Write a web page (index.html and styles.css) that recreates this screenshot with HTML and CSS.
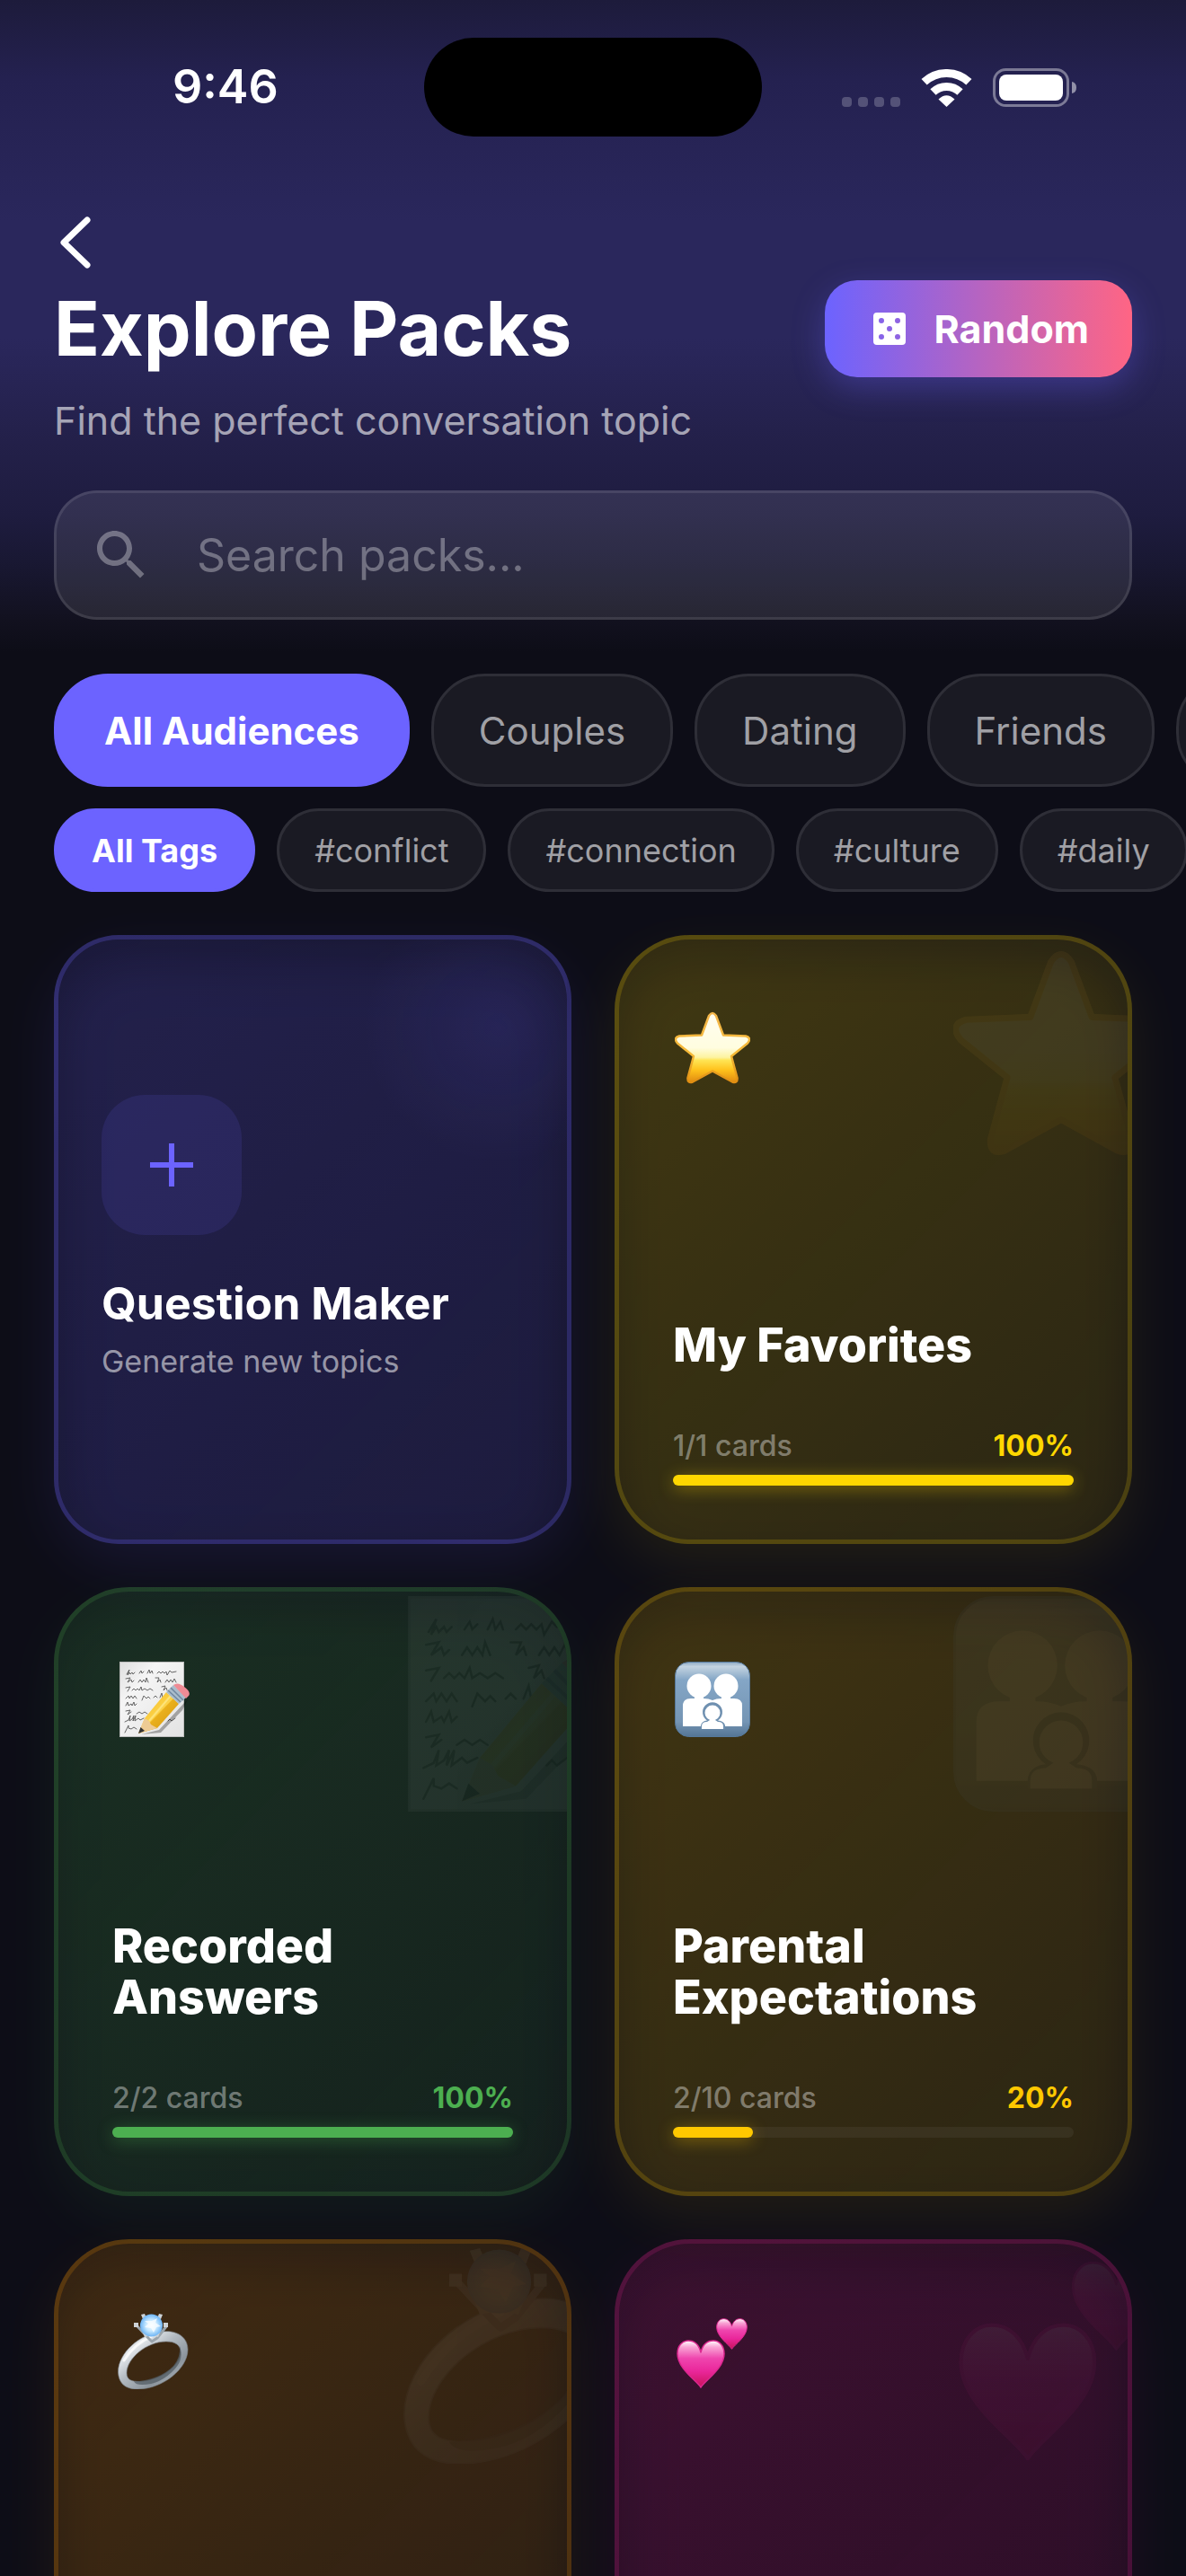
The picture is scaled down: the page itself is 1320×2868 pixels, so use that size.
FILE: index.html
```html
<!DOCTYPE html>
<html lang="en">
<head>
<meta charset="utf-8">
<meta name="viewport" content="width=device-width, initial-scale=1">
<title>Explore Packs</title>
<link rel="stylesheet" href="styles.css">
</head>
<body>
<svg class="sprite" aria-hidden="true">
  <defs>
    <linearGradient id="starFill" x1="0" y1="0" x2="0" y2="1">
      <stop offset="0" stop-color="#fffdf0"/><stop offset=".5" stop-color="#fffde0"/><stop offset=".64" stop-color="#fdf3a0"/><stop offset=".68" stop-color="#ffe555"/><stop offset=".82" stop-color="#ffc21c"/><stop offset="1" stop-color="#e08a10"/>
    </linearGradient>
    <linearGradient id="starRim" x1="0" y1="0" x2="0" y2="1">
      <stop offset="0" stop-color="#f3b64a"/><stop offset=".6" stop-color="#f5b936"/><stop offset="1" stop-color="#e08e12"/>
    </linearGradient>
    <linearGradient id="paperFill" x1="0" y1="0" x2="1" y2="1">
      <stop offset="0" stop-color="#dedede"/><stop offset=".3" stop-color="#f5f5f5"/><stop offset="1" stop-color="#e2e2e2"/>
    </linearGradient>
    <linearGradient id="pencilFill" x1="0" y1="0" x2="1" y2="1">
      <stop offset=".25" stop-color="#f7c22e"/><stop offset=".5" stop-color="#fcd34a"/><stop offset=".52" stop-color="#eab01c"/><stop offset="1" stop-color="#cf9310"/>
    </linearGradient>
    <linearGradient id="tileFill" x1="0" y1="0" x2="0" y2="1">
      <stop offset="0" stop-color="#8fabc4"/><stop offset=".06" stop-color="#c3d3e0"/><stop offset=".24" stop-color="#84a6c6"/><stop offset=".8" stop-color="#7595b4"/><stop offset="1" stop-color="#547595"/>
    </linearGradient>
    <linearGradient id="ringFill" x1="0" y1="0" x2="1" y2="1">
      <stop offset="0" stop-color="#b4bac0"/><stop offset=".25" stop-color="#e6eaee"/><stop offset=".45" stop-color="#b3bac1"/><stop offset=".7" stop-color="#8b949c"/><stop offset="1" stop-color="#c6ccd2"/>
    </linearGradient>
    <radialGradient id="gemFill">
      <stop offset="0" stop-color="#f2fbff"/><stop offset=".5" stop-color="#c6e8ff"/><stop offset="1" stop-color="#6db4f5"/>
    </radialGradient>
    <linearGradient id="heartFill" x1="0" y1="0" x2="0" y2="1">
      <stop offset="0" stop-color="#fff"/><stop offset=".14" stop-color="#f9a3d4"/><stop offset=".38" stop-color="#ef45ae"/><stop offset=".65" stop-color="#ea279b"/><stop offset="1" stop-color="#c9125a"/>
    </linearGradient>
    <symbol id="star" viewBox="0 0 84 84">
      <path d="M38 7Q42 1 46 7L54 28.500L79 29.500Q86 31.500 81 37.500L63 52L69.500 76Q70 82.500 64 80.500L42 68.500L20 80.500Q14 82.500 14.500 76L21 52L3 37.500Q-2 31.500 5 29.500L30 28.500Z" fill="url(#starFill)" stroke="url(#starRim)" stroke-width="2.500" stroke-linejoin="round"/>
    </symbol>
    <symbol id="memo" viewBox="0 0 84 84">
      <rect x="6.500" y=".5" width="71" height="83" fill="url(#paperFill)" stroke="#bdbdbd"/>
      <g fill="none" stroke="#555" stroke-width=".9" stroke-linecap="round">
        <path d="M14 14l3-5-2 6 2-3 1 2 2-2 1 2 2-2M28 13l2-3 1 3 2-2M37 13l2-4 1 4 2-3 1 3M48 13l2-2 2 2 2-2 2 2 2-2 1 4 3-5 2 2 5-1"/>
        <path d="M13 19l5-1-3 5 4-3 1 3 2-2M27 23l2-3 2 3 2-3 2 3 1-5 2 5M46 18l4 0-2 5 3-3 1 3M57 23l2-3 2 3 2-3 2 3 2-4 2 4"/>
        <path d="M13 29l5-1-3 5M20 32l2-2 2 2 2-2 2 2 2-4 1 4 3-2 3 2 3-2 3 2M53 28l4-1-2 5 3-3 1 3"/>
        <path d="M13 41l3-3 1 3 2-3 2 3 2-3 2 3M31 43l2-5 3 3 2-2 2 2M44 40l2-2 2 2M51 40l2-5 1 5 2-2"/>
        <path d="M13 49l2-4 1 4 3-2 1 2 2-4 1 4 2-2"/>
        <path d="M13 55l5-1-3 5 4-3M25 58l3-2 3 2 3-2 3 2M42 58l3-2"/>
        <path d="M12 67l4-2 2-5-1 6 3-2 2-4-1 6 3-6-1 6 4-3 2 2 4-2M60 66l2-2 2 2 4-3"/>
        <path d="M12 79l4-8 0 3 3 1 3-2 3 2M29 76l2-2 3-3"/>
      </g>
      <path d="M30 81L50 76L78 46L82 42L76 54L52 79Z" fill="#000" opacity=".3"/>
      <path d="M27 80L34 63L58 34L72 47L48 74Z" fill="url(#pencilFill)"/>
      <path d="M27 80L34 63L39 66L41 70L48 74Z" fill="#eecb94"/>
      <path d="M27 80L29.500 73L34 77Z" fill="#333"/>
      <path d="M39 66L63 38" stroke="#fde37a" stroke-width="2" fill="none"/>
      <path d="M58 34L66 26L80 40L72 47Z" fill="#a9bccb"/>
      <path d="M60 32L74 45M63 29L77 43" stroke="#7187a0" stroke-width="1.500"/>
      <path d="M66 26Q71 22 78 28Q86 34 83 38L80 41Z" fill="#ef8b95"/>
    </symbol>
    <symbol id="family" viewBox="0 0 84 84">
      <rect x=".5" y=".5" width="83" height="83" rx="15" fill="url(#tileFill)" stroke="#56789a"/>
      <g fill="#fff">
        <circle cx="27" cy="27" r="13.500"/><circle cx="57" cy="27" r="13.500"/>
        <path d="M9 72V49Q9 41 18 41H22V37H32V41Q38 41 42 43Q46 41 52 41V37H62V41H66Q75 41 75 49V72Z"/>
      </g>
      <path d="M29 75V71Q30 66 36 65.500A11 11 0 1 1 48 65.500Q55 66 56 71V75Z" fill="#6f90b0"/>
      <circle cx="42" cy="57" r="8.500" fill="#fff"/>
      <path d="M30 75V72Q30 67 36 67L39 65V63H45V65L48 67Q54 67 54 72V75Z" fill="#fff"/>
    </symbol>
    <symbol id="ring" viewBox="0 0 84 84">
      <path fill-rule="evenodd" fill="url(#ringFill)" stroke="#7d858c" stroke-width=".6" d="M54 20C67 18 82 24 82 40C82 61 54 84 26 84C11 84 5 76 4.500 65C4.500 44 28 22 54 20ZM58 31C36 31 14 50 14 66C14 74 20 75.500 28 75.500C50 75.500 74 58 74 43C74 34 67 31 58 31Z"/>
      <path d="M22 75.500Q50 74 66 58Q74 48 73 36Q78 50 68 61Q52 79 31 79Q24 79 22 75.500Z" fill="#4e585f" opacity=".7"/>
      <path d="M11 52Q22 34 42 25" stroke="#fff" stroke-width="3" stroke-linecap="round" fill="none" opacity=".8"/>
      <path d="M25 13L38 27L42 31L48 27L59 13" fill="none" stroke="#9ba4ab" stroke-width="3" stroke-linejoin="round"/>
      <path d="M22 10h5v5h-5zM55 10h5v5h-5zM30 1l4-1 2 5-4 1zM50 0l4 1-2 5-4-1zM32 21l5-1 1 5-4 1zM46 20l5 1-2 5-3-1z" fill="#cdd2d6"/>
      <circle cx="41.500" cy="13" r="12.500" fill="url(#gemFill)"/>
      <path d="M34 8l4 3-4 4 7 1 3 5 3-6 5-1-6-4 2-5-6 3z" fill="#fff" opacity=".7"/>
    </symbol>
    <symbol id="heart" viewBox="0 0 54 54">
      <path d="M27 53C22 45 1 32 1 15.500C1 6 7 1 13 1C20 1 25 6 27 14C29 6 34 1 41 1C47 1 53 6 53 15.500C53 32 32 45 27 53Z" fill="url(#heartFill)" stroke="#dd2890" stroke-width="1.500" stroke-linejoin="round"/>
    </symbol>
    <symbol id="hearts" viewBox="0 0 84 84">
      <use href="#heart" x="2" y="29" width="54" height="54"/>
      <use href="#heart" x="46" y="5" width="35" height="35"/>
    </symbol>
  </defs>
</svg>

<div class="app">
  <header class="header">
    <div class="status">
      <span class="status-time">9:46</span>
      <span class="island"></span>
      <span class="status-icons">
        <span class="signal"><i></i><i></i><i></i><i></i></span>
        <svg class="wifi" viewBox="0 0 57 42" role="img" aria-label="Wi-Fi">
          <g fill="none" stroke="#fff" stroke-width="9"><path d="M3.600 14.300A36.500 36.500 0 0 1 53.400 14.300"/><path d="M13.500 25.500A21.500 21.500 0 0 1 43.500 25.500"/></g>
          <path d="M28.500 42L19.500 33.500Q28.500 25 37.500 33.500Z" fill="#fff"/>
        </svg>
        <svg class="battery" viewBox="0 0 93 43" role="img" aria-label="Battery">
          <rect x="1.500" y="1.500" width="82" height="40" rx="13" fill="none" stroke="#fff" stroke-opacity=".4" stroke-width="3"/>
          <rect x="7" y="7" width="71" height="29" rx="8" fill="#fff"/>
          <path d="M88 15Q93 16 93 21.500T88 28Z" fill="#fff" fill-opacity=".5"/>
        </svg>
      </span>
    </div>
    <button class="back" type="button" aria-label="Back">
      <svg viewBox="0 0 48 72"><path d="M37 11L11 36L37 61" fill="none" stroke="#fff" stroke-width="7" stroke-linecap="round" stroke-linejoin="round"/></svg>
    </button>
    <div class="title-row">
      <h1 class="title">Explore Packs</h1>
      <button class="random" type="button">
        <svg viewBox="0 0 24 24"><path fill="#fff" fill-rule="evenodd" d="M5 3h14a2 2 0 0 1 2 2v14a2 2 0 0 1-2 2H5a2 2 0 0 1-2-2V5a2 2 0 0 1 2-2zM7.500 6a1.500 1.500 0 1 0 0 3a1.500 1.500 0 1 0 0-3zM16.500 6a1.500 1.500 0 1 0 0 3a1.500 1.500 0 1 0 0-3zM12 10.500a1.500 1.500 0 1 0 0 3a1.500 1.500 0 1 0 0-3zM7.500 15a1.500 1.500 0 1 0 0 3a1.500 1.500 0 1 0 0-3zM16.500 15a1.500 1.500 0 1 0 0 3a1.500 1.500 0 1 0 0-3z"/></svg>
        Random
      </button>
    </div>
    <p class="subtitle">Find the perfect conversation topic</p>
    <label class="search">
      <svg viewBox="0 0 24 24" aria-hidden="true"><path fill="currentColor" d="M15.500 14h-.79l-.28-.27C15.410 12.590 16 11.110 16 9.500 16 5.910 13.090 3 9.500 3S3 5.910 3 9.500 5.910 16 9.500 16c1.610 0 3.090-.59 4.230-1.570l.27.28v.79l5 4.990L20.490 19l-4.990-5zm-6 0C7.010 14 5 11.990 5 9.500S7.010 5 9.500 5 14 7.010 14 9.500 11.990 14 9.500 14z"/></svg>
      <input type="search" placeholder="Search packs..." aria-label="Search packs">
    </label>
  </header>

  <main class="content">
    <div class="chips" role="group" aria-label="Audience">
      <button class="chip" type="button" aria-pressed="true">All Audiences</button>
      <button class="chip" type="button" aria-pressed="false">Couples</button>
      <button class="chip" type="button" aria-pressed="false">Dating</button>
      <button class="chip" type="button" aria-pressed="false">Friends</button>
      <button class="chip" type="button" aria-label="More audiences"></button>
    </div>
    <div class="chips chips-small" role="group" aria-label="Tags">
      <button class="chip" type="button" aria-pressed="true">All Tags</button>
      <button class="chip" type="button" aria-pressed="false">#conflict</button>
      <button class="chip" type="button" aria-pressed="false">#connection</button>
      <button class="chip" type="button" aria-pressed="false">#culture</button>
      <button class="chip" type="button" aria-pressed="false">#daily</button>
    </div>

    <ul class="grid">
      <li class="cell violet">
        <article class="card card-maker">
          <span class="plus"><svg viewBox="0 0 48 48"><path d="M24 0V48M0 24H48" stroke="#6c63ff" stroke-width="6"/></svg></span>
          <h2 class="maker-title">Question Maker</h2>
          <p class="maker-text">Generate new topics</p>
        </article>
      </li>
      <li class="cell gold">
        <article class="card">
          <svg class="watermark" aria-hidden="true"><use href="#star"/></svg>
          <svg class="emoji" role="img" aria-label="Star"><use href="#star"/></svg>
          <h2 class="pack-title">My Favorites</h2>
          <div class="meta"><span>1/1 cards</span><b>100%</b></div>
          <div class="bar"><div class="fill" style="width:100%"></div></div>
        </article>
      </li>
      <li class="cell green">
        <article class="card">
          <svg class="watermark" aria-hidden="true"><use href="#memo"/></svg>
          <svg class="emoji" role="img" aria-label="Memo"><use href="#memo"/></svg>
          <h2 class="pack-title">Recorded Answers</h2>
          <div class="meta"><span>2/2 cards</span><b>100%</b></div>
          <div class="bar"><div class="fill" style="width:100%"></div></div>
        </article>
      </li>
      <li class="cell amber">
        <article class="card">
          <svg class="watermark" aria-hidden="true"><use href="#family"/></svg>
          <svg class="emoji" role="img" aria-label="Family"><use href="#family"/></svg>
          <h2 class="pack-title">Parental Expectations</h2>
          <div class="meta"><span>2/10 cards</span><b>20%</b></div>
          <div class="bar"><div class="fill" style="width:20%"></div></div>
        </article>
      </li>
      <li class="cell orange">
        <article class="card">
          <svg class="watermark" aria-hidden="true"><use href="#ring"/></svg>
          <svg class="emoji" role="img" aria-label="Ring"><use href="#ring"/></svg>
        </article>
      </li>
      <li class="cell pink">
        <article class="card">
          <svg class="watermark" aria-hidden="true"><use href="#hearts"/></svg>
          <svg class="emoji" role="img" aria-label="Hearts"><use href="#hearts"/></svg>
        </article>
      </li>
    </ul>
  </main>
</div>
</body>
</html>
```

FILE: styles.css
```css
* { box-sizing: border-box; }

body {
  margin: 0;
  background: #0d0d17;
  color: #fff;
  font-family: Inter, "Liberation Sans", sans-serif;
}

h1, h2, p, ul { margin: 0; padding: 0; }
button, input { font: inherit; color: inherit; }
svg { display: block; flex: none; }

.sprite { position: absolute; width: 0; height: 0; }

.app { height: 100vh; overflow: hidden; }

/* Header */
.header {
  padding: 0 60px 36px;
  background: linear-gradient(#1d1b3b 0%, #242150 12%, #2a275c 34%, #2a275c 52%, #232049 68%, #1e1c3f 79%, #191833 86%, #12111f 95%, #0d0d17 100%);
}

.status {
  display: grid;
  grid-template-columns: 1fr 376px 1fr;
  align-items: center;
  padding-top: 42px;
}
.status-time { padding-left: 132px; font-size: 52px; line-height: 64px; font-weight: 600; }
.island { height: 110px; border-radius: 55px; background: #000; }
.status-icons { display: flex; justify-content: flex-end; align-items: flex-end; gap: 23px; padding-right: 62px; }
.signal { display: flex; gap: 7px; }
.signal i { width: 11px; height: 11px; border-radius: 4px; background: rgba(255, 255, 255, .22); }
.wifi { width: 57px; height: 42px; }
.battery { width: 93px; height: 43px; }

.back { display: block; margin-top: 82px; padding: 0; border: 0; background: none; }
.back svg { width: 48px; height: 72px; }

.title-row { display: flex; justify-content: space-between; align-items: center; margin-top: 6px; }
.title { font-size: 84px; line-height: 100px; font-weight: 700; }
.random {
  display: flex;
  align-items: center;
  gap: 26px;
  height: 108px;
  padding: 0 48px;
  border: 0;
  border-radius: 36px;
  background: linear-gradient(90deg, #6c63ff, #ff6584);
  box-shadow: 0 12px 36px rgba(108, 99, 255, .3);
  font-size: 43px;
  font-weight: 700;
}
.random svg { width: 48px; height: 48px; }
.subtitle { margin-top: 22px; font-size: 43px; line-height: 52px; color: rgba(255, 255, 255, .6); }

.search {
  display: flex;
  align-items: center;
  gap: 48px;
  height: 144px;
  margin-top: 52px;
  padding: 0 36px;
  border: 3px solid rgba(255, 255, 255, .1);
  border-radius: 48px;
  background: rgba(255, 255, 255, .09);
  color: rgba(255, 255, 255, .33);
}
.search svg { width: 72px; height: 72px; }
.search input { flex: 1; min-width: 0; padding: 0; border: 0; outline: 0; background: none; font-size: 50px; line-height: 60px; }
.search input::placeholder { color: rgba(255, 255, 255, .33); opacity: 1; }

/* Filters */
.content { padding-top: 24px; }
.chips { display: flex; gap: 24px; padding: 0 0 0 60px; overflow: hidden; }
.chip {
  flex: none;
  height: 126px;
  min-width: 126px;
  padding: 0 50px;
  border: 3px solid #2e2e37;
  border-radius: 60px;
  background: #1a1a23;
  color: #a0a0a5;
  font-size: 42px;
  font-weight: 400;
}
.chip[aria-pressed="true"] { padding: 0 53px; border-color: #6c63ff; background: #6c63ff; color: #fff; font-weight: 700; }
.chips-small { margin-top: 24px; }
.chips-small .chip,
.chips-small .chip[aria-pressed="true"] { height: 93px; padding: 0 39px; border-radius: 48px; font-size: 36px; }

/* Cards */
.grid {
  display: grid;
  grid-template-columns: 1fr 1fr;
  gap: 48px;
  padding: 48px 60px;
  list-style: none;
}
.cell { position: relative; --glow: .08; }
.cell::before {
  content: "";
  position: absolute;
  inset: 24px 0 -24px;
  border-radius: 84px;
  background: rgb(var(--rgb));
  opacity: var(--glow);
  filter: blur(30px);
}
.violet { --rgb: 108 99 255; --glow: .1; }
.gold { --rgb: 255 215 0; }
.green { --rgb: 76 175 80; }
.amber { --rgb: 255 200 0; }
.orange { --rgb: 255 152 0; }
.pink { --rgb: 235 32 144; }

.card {
  position: relative;
  display: flex;
  flex-direction: column;
  aspect-ratio: 576 / 678;
  padding: 60px;
  overflow: hidden;
  border: 5px solid rgb(var(--rgb) / .18);
  border-radius: 84px;
  background: linear-gradient(135deg, rgb(var(--rgb) / .15), rgb(var(--rgb) / .05)) border-box;
}
.watermark { position: absolute; top: 5px; right: -46px; width: 240px; height: 240px; opacity: .055; }
.emoji { width: 84px; height: 84px; margin: 18px 0 auto 2px; }
.pack-title { margin-bottom: 66px; font-size: 52px; line-height: 57px; font-weight: 800; }
.meta { display: flex; justify-content: space-between; margin-bottom: 14px; font-size: 32px; line-height: 36px; font-weight: 500; color: rgba(255, 255, 255, .4); }
.meta b { font-weight: 700; color: rgb(var(--rgb)); }
.bar { height: 12px; border-radius: 6px; background: rgba(255, 255, 255, .05); }
.fill { height: 12px; border-radius: 6px; background: rgb(var(--rgb)); box-shadow: 0 3px 18px rgb(var(--rgb) / .4); }

.card-maker {
  justify-content: center;
  padding: 0 48px 6px;
  border-color: rgb(var(--rgb) / .24);
  border-radius: 72px;
  background:
    radial-gradient(circle 150px at 490px 98px, rgb(var(--rgb) / .09), transparent),
    linear-gradient(135deg, rgb(var(--rgb) / .14), rgb(var(--rgb) / .07)) border-box;
}
.plus { display: grid; place-items: center; width: 156px; height: 156px; border-radius: 48px; background: rgb(var(--rgb) / .12); }
.plus svg { width: 48px; height: 48px; }
.maker-title { margin-top: 47px; font-size: 50px; line-height: 58px; font-weight: 700; }
.maker-text { margin-top: 16px; font-size: 34px; line-height: 40px; color: rgba(255, 255, 255, .55); }
```
